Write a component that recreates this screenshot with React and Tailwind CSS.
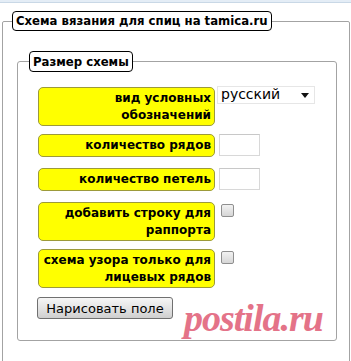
import React from "react"

const rows = [
  { label: ["вид условных", "обозначений"], kind: "select" },
  { label: ["количество рядов"], kind: "text" },
  { label: ["количество петель"], kind: "text" },
  { label: ["добавить строку для", "раппорта"], kind: "check" },
  { label: ["схема узора только для", "лицевых рядов"], kind: "check" },
]

function Field({ kind }) {
  if (kind === "select") {
    return (
      <div className="flex h-[18px] w-[98px] items-center justify-between border border-[#e6e6e6] bg-white pl-[3px] pr-[5px] text-[14px] leading-none text-black">
        <span className="-mt-[2px]">русский</span>
        <svg width="8" height="5" viewBox="0 0 8 5">
          <path d="M0 0h8L4 5z" fill="#111" />
        </svg>
      </div>
    )
  }
  if (kind === "text") {
    return <div className="ml-[2px] h-[22px] w-[41px] border border-[#d8d8d8] border-t-[#c8c8c8] bg-white" />
  }
  return (
    <div className="ml-[4px] mt-[2px] h-[13px] w-[13px] rounded-[2px] border border-[#8f8f8f] bg-gradient-to-b from-[#f2f2f2] to-[#d6d6d6]" />
  )
}

export default function App() {
  return (
    <div className="relative h-[361px] w-[351px] overflow-hidden bg-white font-['DejaVu_Sans',Verdana,sans-serif]">
      <div className="h-[3px] border-b border-[#c9d8e6] bg-[#e4edf6]" />

      <fieldset className="ml-[2px] mr-[1px] mt-[8px] h-[400px] rounded-[2px] border border-[#a3a3a3] p-0">
        <legend className="ml-[9px] rounded-[4px] border border-black bg-white px-[3px] font-['DejaVu_Sans_Condensed','DejaVu_Sans',sans-serif] text-[13px] font-bold leading-[18px] text-black">
          Схема вязания для спиц на tamica.ru
        </legend>

        <fieldset className="ml-[14px] mr-[12px] mt-[20px] h-[290px] rounded-[3px] border border-[#a3a3a3] p-0">
          <legend className="ml-[11px] rounded-[4px] border border-black bg-white px-[3px] font-['DejaVu_Sans_Condensed','DejaVu_Sans',sans-serif] text-[13px] font-bold leading-[19px] text-black">
            Размер схемы
          </legend>

          <div className="ml-[20px] mt-[15px] flex flex-col">
            {rows.map((row, i) => (
              <div
                key={i}
                className={`flex items-start ${i === 0 ? "" : i === 1 || i === 4 ? "mt-[8px]" : "mt-[11px]"}`}
              >
                <div
                  className={`flex w-[177px] flex-col items-end justify-center rounded-[5px] border border-[#9c9a3a] bg-[#ffff00] pr-[3px] text-[12px] font-bold leading-[17px] text-black ${
                    row.label.length > 1 ? "h-[39px]" : "h-[23px]"
                  }`}
                >
                  {row.label.map((t) => (
                    <span key={t}>{t}</span>
                  ))}
                </div>
                <div className={`ml-[2px] ${row.kind === "select" ? "-mt-[1px]" : ""}`}>
                  <Field kind={row.kind} />
                </div>
              </div>
            ))}

            <button className="mt-[9px] h-[22px] w-[136px] -ml-[1px] rounded-[3px] border border-[#707070] bg-gradient-to-b from-[#f6f6f6] via-[#e4e4e4] to-[#cfcfcf] text-[13px] leading-none text-black">
              Нарисовать поле
            </button>
          </div>
        </fieldset>
      </fieldset>

      <div className="pointer-events-none absolute left-[184px] top-[299px] font-['Liberation_Serif',serif] text-[38px] font-bold italic leading-none tracking-[-1px] text-[#e2647c] opacity-90">
        postila.ru
      </div>
    </div>
  )
}
